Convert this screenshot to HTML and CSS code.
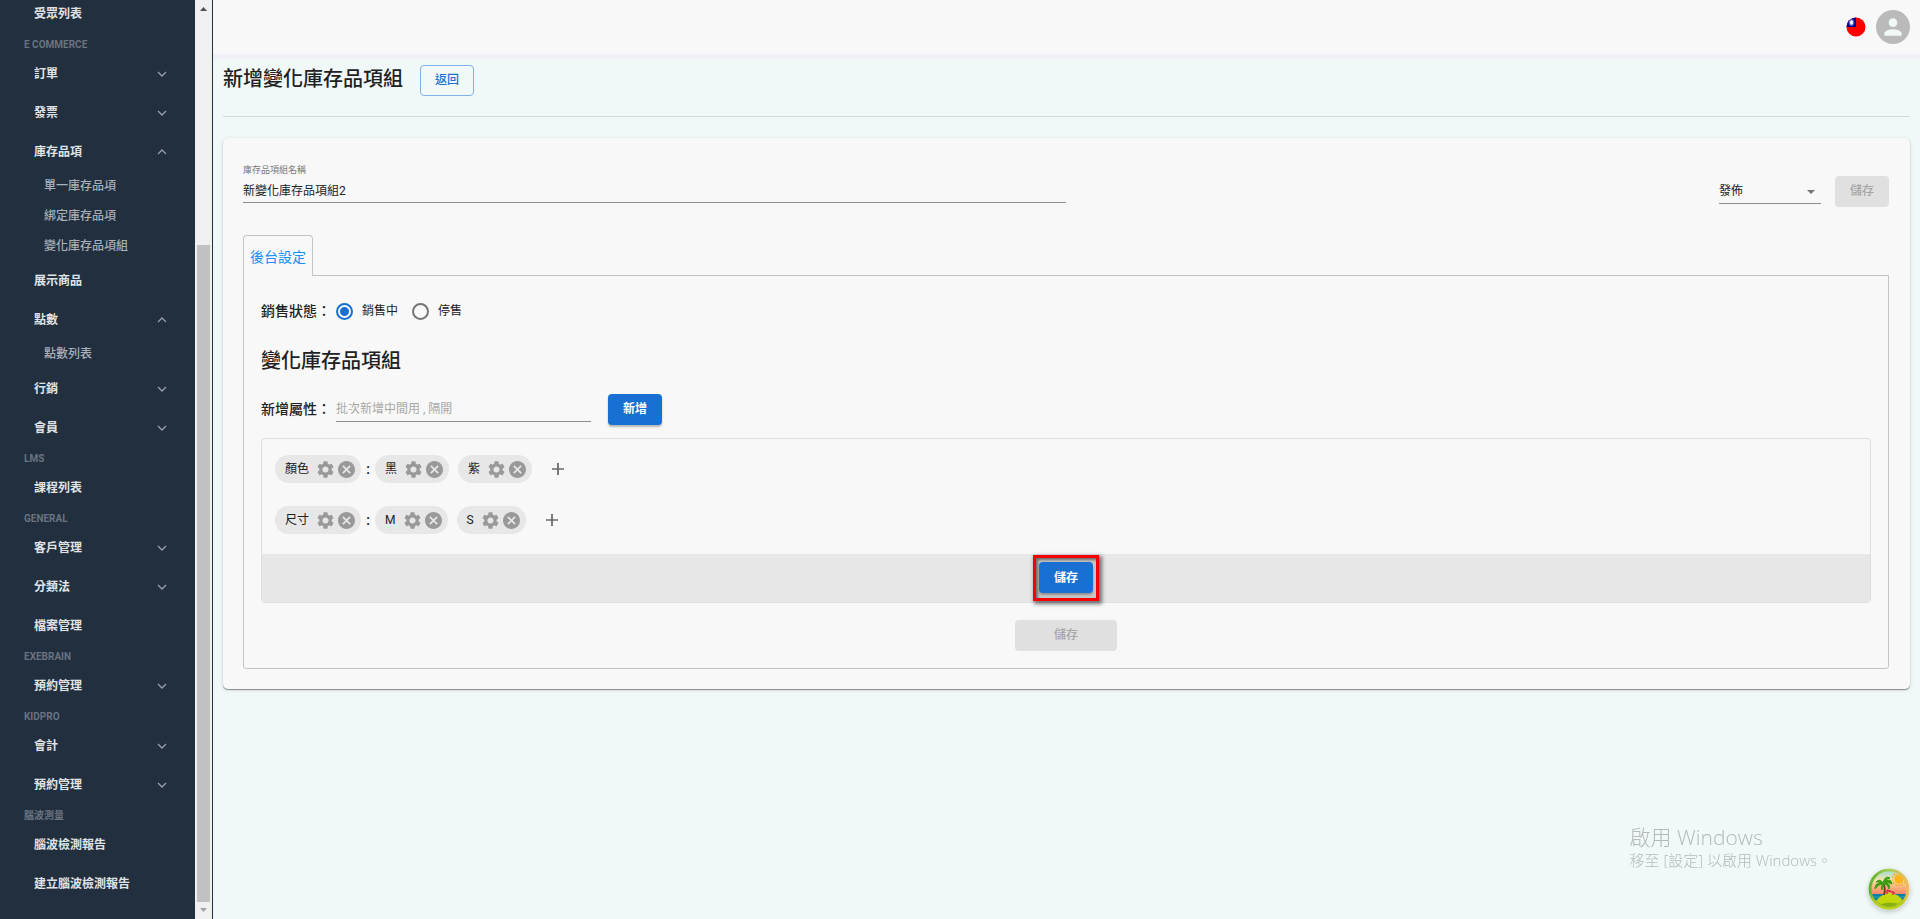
FILE: index.html
```html
<!DOCTYPE html>
<html lang="zh-Hant">
<head>
<meta charset="utf-8">
<meta name="viewport" content="width=device-width, initial-scale=1">
<title>新增變化庫存品項組</title>
<link rel="stylesheet" href="styles.css">
</head>
<body>
<svg class="defs" aria-hidden="true">
  <symbol id="down" viewBox="0 0 10 10"><path d="M1 3l4 4 4-4" fill="none" stroke="currentColor" stroke-width="1.3"/></symbol>
  <symbol id="up" viewBox="0 0 10 10"><path d="M1 7l4-4 4 4" fill="none" stroke="currentColor" stroke-width="1.3"/></symbol>
  <symbol id="gear" viewBox="2 2 20 20"><path d="M19.14 12.94c.04-.3.06-.61.06-.94 0-.32-.02-.64-.07-.94l2.03-1.58a.49.49 0 0 0 .12-.61l-1.92-3.32a.49.49 0 0 0-.59-.22l-2.39.96c-.5-.38-1.03-.7-1.62-.94l-.36-2.54a.48.48 0 0 0-.48-.41h-3.84a.48.48 0 0 0-.47.41l-.36 2.54c-.59.24-1.13.57-1.62.94l-2.39-.96a.48.48 0 0 0-.59.22L2.74 8.87a.48.48 0 0 0 .12.61l2.03 1.58c-.05.3-.09.63-.09.94s.02.64.07.94l-2.03 1.58a.49.49 0 0 0-.12.61l1.92 3.32c.12.22.37.29.59.22l2.39-.96c.5.38 1.03.7 1.62.94l.36 2.54c.05.24.24.41.48.41h3.84c.24 0 .44-.17.47-.41l.36-2.54c.59-.24 1.13-.56 1.62-.94l2.39.96c.22.08.47 0 .59-.22l1.92-3.32a.48.48 0 0 0-.12-.61zM12 15.6A3.61 3.61 0 0 1 8.4 12c0-1.98 1.62-3.6 3.6-3.6s3.6 1.62 3.6 3.6-1.62 3.6-3.6 3.6z" fill="currentColor"/></symbol>
  <symbol id="cancel" viewBox="2 2 20 20"><path d="M12 2C6.47 2 2 6.47 2 12s4.47 10 10 10 10-4.47 10-10S17.53 2 12 2zm5 13.59L15.59 17 12 13.41 8.41 17 7 15.59 10.59 12 7 8.41 8.41 7 12 10.59 15.59 7 17 8.41 13.41 12z" fill="currentColor"/></symbol>
  <symbol id="plus" viewBox="5 5 14 14"><path d="M19 13h-6v6h-2v-6H5v-2h6V5h2v6h6z" fill="currentColor"/></symbol>
</svg>
<div class="app">
  <aside class="sidebar">
    <nav class="nav">
      <a class="item" href="#">受眾列表</a>
      <h2 class="group">E COMMERCE</h2>
      <a class="item" href="#">訂單<svg class="chev"><use href="#down"/></svg></a>
      <a class="item" href="#">發票<svg class="chev"><use href="#down"/></svg></a>
      <a class="item" href="#">庫存品項<svg class="chev"><use href="#up"/></svg></a>
      <div class="sub">
        <a class="subitem" href="#">單一庫存品項</a>
        <a class="subitem" href="#">綁定庫存品項</a>
        <a class="subitem" href="#">變化庫存品項組</a>
      </div>
      <a class="item" href="#">展示商品</a>
      <a class="item" href="#">點數<svg class="chev"><use href="#up"/></svg></a>
      <div class="sub">
        <a class="subitem" href="#">點數列表</a>
      </div>
      <a class="item" href="#">行銷<svg class="chev"><use href="#down"/></svg></a>
      <a class="item" href="#">會員<svg class="chev"><use href="#down"/></svg></a>
      <h2 class="group">LMS</h2>
      <a class="item" href="#">課程列表</a>
      <h2 class="group">GENERAL</h2>
      <a class="item" href="#">客戶管理<svg class="chev"><use href="#down"/></svg></a>
      <a class="item" href="#">分類法<svg class="chev"><use href="#down"/></svg></a>
      <a class="item" href="#">檔案管理</a>
      <h2 class="group">EXEBRAIN</h2>
      <a class="item" href="#">預約管理<svg class="chev"><use href="#down"/></svg></a>
      <h2 class="group">KIDPRO</h2>
      <a class="item" href="#">會計<svg class="chev"><use href="#down"/></svg></a>
      <a class="item" href="#">預約管理<svg class="chev"><use href="#down"/></svg></a>
      <h2 class="group">腦波測量</h2>
      <a class="item" href="#">腦波檢測報告</a>
      <a class="item" href="#">建立腦波檢測報告</a>
    </nav>
    <div class="scroll" aria-hidden="true">
      <svg class="arrow dark" viewBox="0 0 17 17"><path d="M5 11h7L8.500 7z" fill="currentColor"/></svg>
      <div class="track"><div class="thumb"></div></div>
      <svg class="arrow" viewBox="0 0 17 17"><path d="M5 6h7l-3.500 4z" fill="currentColor"/></svg>
    </div>
  </aside>

  <div class="main">
    <header class="topbar">
      <button class="round flag" type="button" aria-label="語言">
        <svg viewBox="0 0 20 20"><clipPath id="fc"><circle cx="10" cy="10" r="9.500"/></clipPath><g clip-path="url(#fc)"><path fill="#fe0000" d="M0 0h20v20H0z"/><path fill="#000095" d="M0 0h10v10H0z"/><ellipse cx="5.500" cy="5.500" rx="2.800" ry="3.400" fill="#8fa0d8" opacity=".6"/><ellipse cx="5.500" cy="5.500" rx="1.500" ry="2.200" fill="#fff"/></g></svg>
      </button>
      <button class="round avatar" type="button" aria-label="帳號">
        <svg viewBox="0 0 24 24"><path fill="currentColor" d="M12 12c2.210 0 4-1.790 4-4s-1.790-4-4-4-4 1.790-4 4 1.790 4 4 4zm0 2c-2.670 0-8 1.340-8 4v2h16v-2c0-2.660-5.330-4-8-4z"/></svg>
      </button>
    </header>

    <main class="page">
      <div class="titlebar">
        <h1 class="title">新增變化庫存品項組</h1>
        <button class="btn outline" type="button">返回</button>
      </div>

      <section class="card">
        <div class="cardhead">
          <div class="namefield">
            <label class="tiny" for="name">庫存品項組名稱</label>
            <input class="line" id="name" type="text" value="新變化庫存品項組2">
          </div>
          <div class="publish">
            <div class="selectwrap">
              <select class="line" aria-label="狀態"><option>發佈</option></select>
              <svg class="caret" viewBox="0 0 8 4"><path d="M0 0h8L4 4z" fill="currentColor"/></svg>
            </div>
            <button class="btn" type="button" disabled>儲存</button>
          </div>
        </div>

        <div class="tabs"><button class="tab" type="button">後台設定</button></div>
        <div class="panel">
          <div class="row" role="radiogroup" aria-labelledby="sale">
            <span class="rowlabel" id="sale">銷售狀態：</span>
            <label class="radio"><input type="radio" name="sale" checked>銷售中</label>
            <label class="radio"><input type="radio" name="sale">停售</label>
          </div>
          <h2 class="title sectiontitle">變化庫存品項組</h2>
          <div class="row">
            <label class="rowlabel" for="attr">新增屬性：</label>
            <input class="line attr" id="attr" type="text" placeholder="批次新增中間用 , 隔開">
            <button class="btn primary" type="button">新增</button>
          </div>

          <div class="box">
            <div class="attrs">
              <div class="chips">
                <span class="chip">顏色<button type="button" aria-label="設定"><svg><use href="#gear"/></svg></button><button type="button" aria-label="移除"><svg><use href="#cancel"/></svg></button></span>
                <span class="colon">:</span>
                <span class="chip">黑<button type="button" aria-label="設定"><svg><use href="#gear"/></svg></button><button type="button" aria-label="移除"><svg><use href="#cancel"/></svg></button></span>
                <span class="chip next">紫<button type="button" aria-label="設定"><svg><use href="#gear"/></svg></button><button type="button" aria-label="移除"><svg><use href="#cancel"/></svg></button></span>
                <button class="add" type="button" aria-label="新增選項"><svg><use href="#plus"/></svg></button>
              </div>
              <div class="chips">
                <span class="chip">尺寸<button type="button" aria-label="設定"><svg><use href="#gear"/></svg></button><button type="button" aria-label="移除"><svg><use href="#cancel"/></svg></button></span>
                <span class="colon">:</span>
                <span class="chip">M<button type="button" aria-label="設定"><svg><use href="#gear"/></svg></button><button type="button" aria-label="移除"><svg><use href="#cancel"/></svg></button></span>
                <span class="chip next">S<button type="button" aria-label="設定"><svg><use href="#gear"/></svg></button><button type="button" aria-label="移除"><svg><use href="#cancel"/></svg></button></span>
                <button class="add" type="button" aria-label="新增選項"><svg><use href="#plus"/></svg></button>
              </div>
            </div>
            <div class="boxfoot">
              <div class="marked"><button class="btn primary" type="button">儲存</button></div>
            </div>
          </div>
          <button class="btn wide" type="button" disabled>儲存</button>
        </div>
      </section>
    </main>
  </div>
</div>

<div class="watermark"><p class="wm1">啟用 Windows</p><p class="wm2">移至 [設定] 以啟用 Windows。</p></div>
<button class="fab" type="button" aria-label="工具">
  <svg viewBox="0 0 42 42">
    <defs>
      <linearGradient id="sky" x1="0" y1="0" x2="0" y2="1"><stop offset="0" stop-color="#8edbe2"/><stop offset=".3" stop-color="#f6e3a4"/><stop offset=".5" stop-color="#fba674"/><stop offset=".65" stop-color="#f3806c"/></linearGradient>
      <linearGradient id="ring" x1="0" y1="0" x2="1" y2="0"><stop offset="0" stop-color="#5fae2c"/><stop offset=".5" stop-color="#a5cf5a"/><stop offset="1" stop-color="#f3b95a"/></linearGradient>
      <linearGradient id="ring2" x1="0" y1="0" x2="0" y2="1"><stop offset=".6" stop-color="#b9cf20" stop-opacity="0"/><stop offset=".85" stop-color="#b9cf20"/></linearGradient>
      <clipPath id="in"><circle cx="21" cy="21" r="17.500"/></clipPath>
    </defs>
    <circle cx="21" cy="21" r="20.500" fill="url(#ring)"/><circle cx="21" cy="21" r="20.500" fill="url(#ring2)"/>
    <g clip-path="url(#in)">
      <path fill="url(#sky)" d="M0 0h42v42H0z"/>
      <circle cx="31" cy="11" r="6.500" fill="none" stroke="#f59f20" stroke-width="1.500" stroke-dasharray="1.500 1.500"/>
      <circle cx="31" cy="11" r="4.800" fill="#ffb21c"/>
      <path fill="#087ea3" d="M0 26h42v16H0z"/>
      <path d="M5 29h32M5 33h32" stroke="#29a9c2" stroke-width="1"/>
      <path d="M7 34q6-8 14-9 9 0 15 9v8H7z" fill="#c3d80c"/>
      <path d="M10 37q12-5 24 0v5H10z" fill="#86b30d"/>
      <path d="M15 15q3 5 1 12" fill="none" stroke="#743b20" stroke-width="2"/>
      <path d="M15 15q-3-5-7-1 3-1 4 1-5 0-5 6 3-5 8-5-3 3-1 6 0-4 3-6 3 1 4 5 2-5-3-6 2-1 6 1-1-6-6-3 1-3 4-3-5-3-7 5z" fill="#3a9c16" stroke="#3a9c16"/>
      <path d="M19 22l8 3M19 22v4M25 25v2" stroke="#d9364e" stroke-width="1.500"/>
    </g>
  </svg>
</button>
</body>
</html>
```
FILE: styles.css
```css
* { box-sizing: border-box; }
body {
  margin: 0;
  background: #f0f8f8;
  color: #212121;
  font: 400 12px/18px Roboto, "Noto Sans CJK TC", sans-serif;
}
h1, h2, p { margin: 0; }
a { color: inherit; text-decoration: none; }
button, input, select { margin: 0; padding: 0; border: 0; background: none; color: inherit; font: inherit; }
button:not(:disabled) { cursor: pointer; }
svg { display: block; }
.defs { position: absolute; width: 0; height: 0; }

.app { display: flex; height: 100vh; }

/* Sidebar */
.sidebar { display: flex; flex: none; width: 213px; overflow: hidden; background: #212f3f; }
.nav { flex: 1; margin-top: -6px; font-weight: 700; color: #e0e3e6; }
.item { display: flex; align-items: center; justify-content: space-between; height: 39px; padding: 0 28px 0 34px; }
.group { display: flex; align-items: center; height: 21px; padding: 2px 0 0 24px; font-size: 10px; font-weight: 700; color: #6a7380; }
.sub { font-weight: 500; }
.subitem { display: flex; align-items: center; height: 30px; padding-left: 44px; color: #abb0b8; }
.chev { width: 10px; height: 10px; color: #9a9fa9; }
.scroll { display: flex; flex-direction: column; width: 17px; margin-right: 1px; background: #f0f0f0; }
.arrow { flex: none; width: 17px; height: 17px; color: #a3a3a3; }
.arrow.dark { color: #505050; }
.track { display: flex; flex: 1; flex-direction: column; padding: 0 2px; }
.track::before { content: ""; flex: 9; }
.thumb { flex: 26; background: #c1c1c1; }

/* Top bar */
.main { flex: 1; min-width: 0; overflow: hidden; }
.topbar {
  display: flex; align-items: center; justify-content: flex-end; gap: 10px;
  height: 54px; padding: 0 10px; background: #f8f8f8; box-shadow: 0 5px 0 #eef1f5;
}
.round { border-radius: 50%; }
.flag svg { width: 20px; height: 20px; }
.avatar { display: grid; place-items: center; width: 34px; height: 34px; background: #bababa; color: #f0f8f8; }
.avatar svg { width: 26px; height: 26px; }

/* Page */
.page { padding: 11px 10px; }
.titlebar { display: flex; align-items: flex-start; gap: 17px; height: 52px; margin-bottom: 21px; border-bottom: 1px solid #d5d9da; }
.title { font-size: 20px; line-height: 28px; font-weight: 500; }
.btn {
  min-width: 54px; height: 31px; padding: 0 14px 2px; border-radius: 4px;
  font-weight: 500; line-height: 18px;
}
.btn:disabled { background: #e0e0e0; color: #a6a6a6; }
.outline { border: 1px solid #80b0e4; color: #1b71d2; }
.primary { padding-bottom: 0; background: #1870d3; color: #fff; box-shadow: 0 2px 2px #00000044; font-weight: 700; }
.card { padding: 20px 21px 20px 20px; border-radius: 5px; background: #f8f8f8; box-shadow: 0 1px 1px #00000066, 0 1px 4px #0000001f; }
.cardhead { display: flex; align-items: flex-end; justify-content: space-between; height: 49px; margin-bottom: 28px; }
.namefield { width: 50%; height: 45px; align-self: flex-start; }
.tiny { display: block; padding-top: 5px; font-size: 9px; line-height: 14px; color: #777; }
.line { display: block; width: 100%; height: 26px; border-bottom: 1px solid #8d8d8d; border-radius: 0; outline: 0; }
.line::placeholder { color: #a8a8a8; opacity: 1; }
.publish { display: flex; align-items: center; gap: 14px; }
.selectwrap { position: relative; width: 102px; }
.selectwrap select { appearance: none; height: 24px; padding-bottom: 1px; }
.caret { position: absolute; top: 10px; right: 6px; width: 8px; height: 4px; color: #757575; pointer-events: none; }

/* Tab panel */
.tabs { display: flex; }
.tab {
  position: relative; z-index: 1; height: 41px; margin-bottom: -1px; padding: 2px 6px 0; font-size: 14px; color: #1890f5;
  border: 1px solid #c4c4c4; border-bottom: 0; border-radius: 4px 4px 0 0; background: #f8f8f8;
}
.panel { padding: 17px; border: 1px solid #c4c4c4; border-radius: 0 0 3px 3px; }
.row { display: flex; align-items: center; min-height: 36px; }
.rowlabel { width: 75px; font-size: 14px; font-weight: 500; white-space: nowrap; }
.radio { display: flex; align-items: center; gap: 9px; margin-right: 14px; }
.radio input {
  appearance: none; width: 17px; height: 17px; border: 2px solid #757575; border-radius: 50%;
}
.radio input:checked { border-color: #1870d3; background: radial-gradient(circle, #1870d3 4px, #0000 5px); }
.sectiontitle { margin: 18px 0 16px; }
.attr { width: 255px; margin-right: 17px; }
.box { margin-top: 11px; border: 1px solid #dedede; border-radius: 4px; }
.attrs { display: flex; flex-direction: column; gap: 23px; padding: 16px 13px 20px; }
.chips { display: flex; align-items: center; }
.chip { display: flex; align-items: center; height: 28px; padding: 0 6px 0 10px; border-radius: 14px; background: #e7e7e7; }
.chip button { margin-left: 4px; color: #999; }
.chip button:first-of-type { margin-left: 8px; }
.chip svg { width: 17px; height: 17px; }
.next { margin-left: 9px; }
.colon { width: 14px; text-align: center; font-size: 14px; font-weight: 500; }
.add { margin-left: 20px; color: #686868; }
.add svg { width: 12px; height: 12px; }
.boxfoot { display: flex; justify-content: center; height: 48px; border-radius: 0 0 3px 3px; background: #e7e7e7; }
.marked { margin: 1px 0; padding: 4px 3px; border: 3px solid #f60000; background: #c8c8c8; box-shadow: 2px 2px 4px 1px #00000088, inset 2px 2px 3px #00000077; }
.wide { display: block; min-width: 102px; margin: 17px auto 0; }

/* Overlays */
.watermark { position: fixed; right: 88px; bottom: 49px; color: #b5b9b9; font-family: "Open Sans", "Noto Sans CJK TC", sans-serif; font-weight: 300; white-space: nowrap; }
.wm1 { font-size: 21px; line-height: 26px; }
.wm2 { font-size: 15px; line-height: 20px; }
.fab { position: fixed; right: 10px; bottom: 9px; border-radius: 50%; box-shadow: 0 2px 5px #0003; }
.fab svg { width: 42px; height: 42px; }
```
